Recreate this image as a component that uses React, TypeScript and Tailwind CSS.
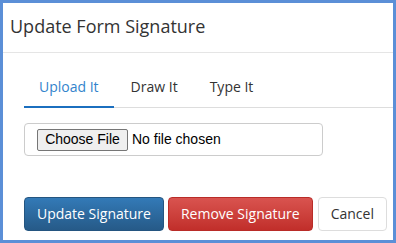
export default function App() {
  return (
    <div className="flex h-[243px] w-[396px] flex-col border-[3px] border-[#5b8fd7] bg-white font-['Open_Sans',sans-serif] text-[#333]">
      <Header />
      <main className="flex flex-1 flex-col pt-[14px]">
        <Tabs />
        <FileField />
        <Actions />
      </main>
    </div>
  );
}

/* -------------------- Header -------------------- */

function Header() {
  return (
    <header className="flex h-[50px] items-center border-b border-[#e5e5e5] pl-[7px] pb-[3px]">
      <h1 className="text-[18px] leading-[25px] text-[#333]">
        Update Form Signature
      </h1>
    </header>
  );
}

/* -------------------- Tabs -------------------- */

function Tabs() {
  const tabs = ["Upload It", "Draw It", "Type It"];
  return (
    <nav className="ml-[21px] flex border-b border-[#dddddd]">
      {tabs.map((t, i) => (
        <a
          key={t}
          className={`mr-[2px] -mb-px px-[15px] pt-[10px] pb-[9px] text-[14px] leading-[20px] ${
            i === 0
              ? "border-b-2 border-[#1b6fbf] text-[#3384cc]"
              : "border-b-2 border-transparent text-[#333]"
          }`}
        >
          {t}
        </a>
      ))}
    </nav>
  );
}

/* -------------------- File input -------------------- */

function FileField() {
  return (
    <div className="ml-[21px] mt-[15px] flex h-[33px] w-[299px] items-center rounded-[4px] border border-[#cccccc] px-[12px] font-['Liberation_Sans',Arial,sans-serif] text-[14px] text-black">
      <span className="flex h-[22px] w-[91px] items-center justify-center rounded-[2px] border border-[#767676] bg-[#efefef]">
        Choose File
      </span>
      <span className="ml-[4px]">No file chosen</span>
    </div>
  );
}

/* -------------------- Buttons -------------------- */

function Actions() {
  return (
    <div className="ml-[21px] mt-[41px] flex gap-[4px] text-[14px] leading-[20px]">
      <button className="h-[34px] rounded-[4px] border border-[#245580] bg-gradient-to-b from-[#337ab7] to-[#265a88] px-[12px] text-white">
        Update Signature
      </button>
      <button className="h-[34px] rounded-[4px] border border-[#b92c28] bg-gradient-to-b from-[#d9534f] to-[#c12e2a] px-[12px] text-white">
        Remove Signature
      </button>
      <button className="ml-[1px] h-[34px] rounded-[4px] border border-[#dddddd] bg-white px-[12px] text-[#333]">
        Cancel
      </button>
    </div>
  );
}
